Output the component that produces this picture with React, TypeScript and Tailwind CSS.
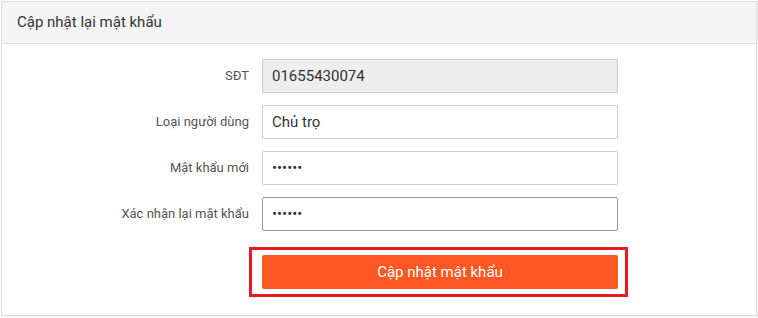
import React from 'react';

type FieldProps = {
    label: string;
    value: string;
    type?: string;
    disabled?: boolean;
    focused?: boolean;
};

const Field: React.FC<FieldProps> = ({ label, value, type = 'text', disabled, focused }) => (
    <div className="flex items-center">
        <label className="w-[248px] pr-[1px] text-right text-[13px] text-[#555]">{label}</label>
        <div className="ml-[12px] w-[356px]">
            <input
                type={type}
                defaultValue={value}
                readOnly
                disabled={disabled}
                className={`h-[34px] w-full rounded-[2px] border px-[9px] text-[15px] text-[#333] outline-none ${
                    disabled ? 'border-[#ccc] bg-[#eee]' : focused ? 'border-[#999] bg-white' : 'border-[#ccc] bg-white'
                }`}
            />
        </div>
    </div>
);

export default function App() {
    return (
        <div className="h-[318px] w-[758px] bg-white p-[1px]" style={{ fontFamily: 'Roboto, "Liberation Sans", sans-serif' }}>
            <div className="w-[756px] border border-[#ddd] shadow-[1px_1px_2px_rgba(0,0,0,0.08)]">
                <div className="flex h-[42px] items-center border-b border-[#ddd] bg-[#f4f4f4] px-[15px] text-[15px] text-[#333]">
                    Cập nhật lại mật khẩu
                </div>
                <div className="flex flex-col gap-[12px] pt-[15px] pb-[18px]">
                    <Field label="SĐT" value="01655430074" disabled />
                    <Field label="Loại người dùng" value="Chủ trọ" />
                    <Field label="Mật khẩu mới" value="123456" type="password" />
                    <Field label="Xác nhận lại mật khẩu" value="123456" type="password" focused />
                    <div className="mt-[4px] flex">
                        <div className="ml-[247px] border-[3px] border-[#e51c23] py-[5px] pl-[10px] pr-[7px]">
                            <button
                                type="button"
                                className="h-[34px] w-[356px] rounded-[2px] bg-[#ff5722] text-[15px] text-white"
                            >
                                Cập nhật mật khẩu
                            </button>
                        </div>
                    </div>
                </div>
            </div>
        </div>
    );
}
